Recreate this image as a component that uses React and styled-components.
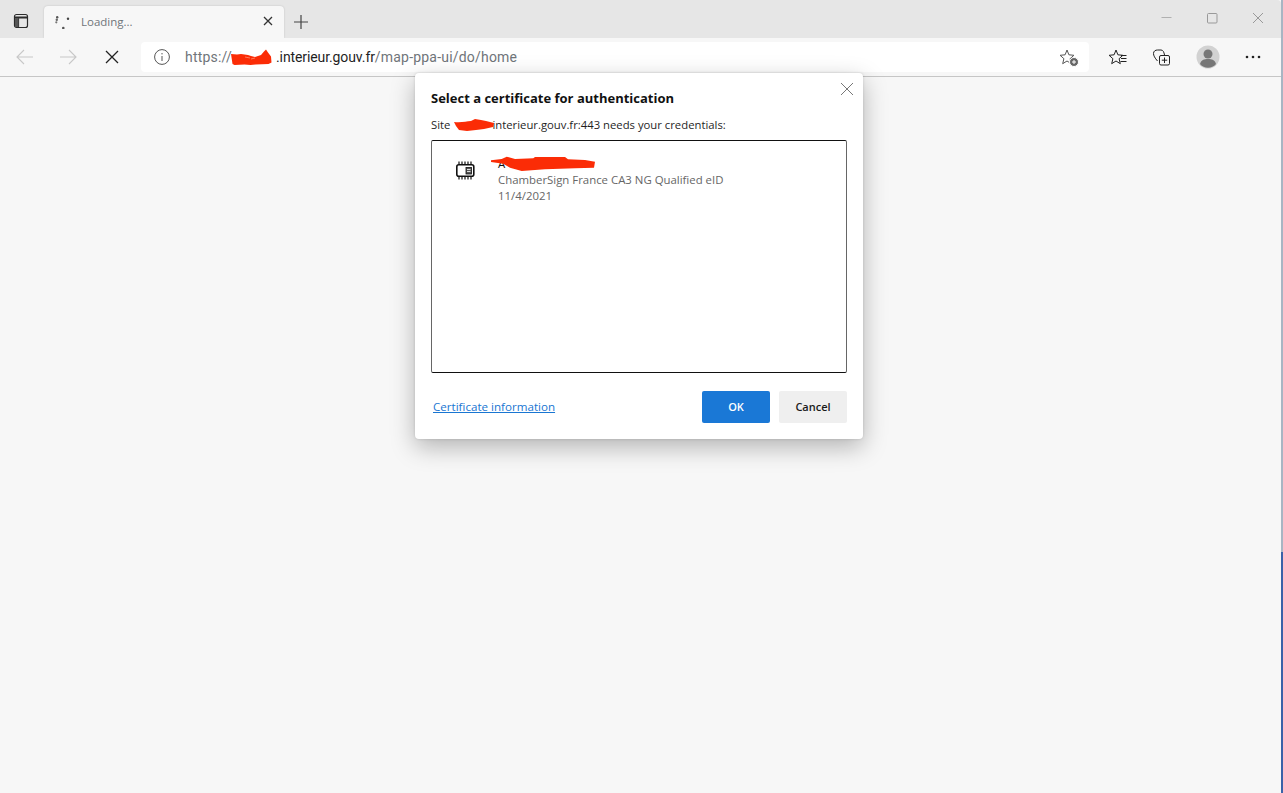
import styled, { createGlobalStyle } from 'styled-components';

const GlobalStyle = createGlobalStyle`
  html, body {
    margin: 0;
    padding: 0;
    height: 100%;
    overflow: hidden;
    background: #f7f7f7;
    font-family: "Open Sans", "Noto Sans", sans-serif;
  }
  * {
    box-sizing: border-box;
  }
`;

const Screen = styled.div`
  width: 1283px;
  height: 793px;
  display: flex;
`;

const Window = styled.div`
  position: relative;
  width: 1281px;
  height: 793px;
  display: flex;
  flex-direction: column;
  background: #f7f7f7;
`;

const DesktopEdge = styled.div`
  width: 2px;
  height: 793px;
  background: linear-gradient(to bottom, #a8b5c3 0, #a8b5c3 552px, #3a62a8 552px, #3a62a8 100%);
`;

const TabStrip = styled.div`
  height: 38px;
  flex: none;
  display: flex;
  align-items: flex-end;
  background: #e6e6e6;
  padding-left: 9px;
  border-top-right-radius: 4px;
`;

const StripButton = styled.div`
  width: 24px;
  height: 24px;
  margin-bottom: 5px;
  display: flex;
  align-items: center;
  justify-content: center;
`;

const Tab = styled.div`
  width: 240px;
  height: 32px;
  margin-left: 11px;
  padding: 0 10px 2px 11px;
  display: flex;
  align-items: center;
  background: #f7f7f7;
  border-radius: 4px 4px 0 0;
  box-shadow: 0 0 2px rgba(0, 0, 0, 0.18);
`;

const TabTitle = styled.span`
  flex: 1;
  margin-left: 10px;
  font-size: 11.5px;
  color: #70757a;
`;

const NewTab = styled.div`
  width: 24px;
  height: 24px;
  margin: 0 0 4px 5px;
  display: flex;
  align-items: center;
  justify-content: center;
`;

const WindowControls = styled.div`
  margin-left: auto;
  height: 38px;
  display: flex;
  gap: 34px;
  padding: 12px 17px 0 0;
`;

const Toolbar = styled.div`
  height: 39px;
  flex: none;
  display: flex;
  align-items: center;
  padding: 0 0 1px 13px;
  background: #f7f7f7;
  border-bottom: 1px solid #c6c6c6;
`;

const NavButton = styled.div`
  width: 24px;
  height: 24px;
  margin-right: ${(props) => props.$gap}px;
  display: flex;
  align-items: center;
  justify-content: center;
`;

const AddressBar = styled.div`
  width: 948px;
  height: 30px;
  padding: 0 10px 0 13px;
  display: flex;
  align-items: center;
  background: #ffffff;
  border-radius: 4px;
`;

const Url = styled.div`
  position: relative;
  flex: 1;
  margin-left: 15px;
  font-family: Roboto, "Open Sans", sans-serif;
  font-size: 14px;
  letter-spacing: 0.2px;
  color: #70757a;
  white-space: nowrap;
`;

const UrlHost = styled.span`
  margin-left: 44px;
  letter-spacing: -0.1px;
  color: #1f1f1f;
`;

const Actions = styled.div`
  display: flex;
  align-items: center;
  margin-left: 17px;
`;

const ActionButton = styled.div`
  width: 24px;
  height: 24px;
  margin-right: ${(props) => props.$gap}px;
  display: flex;
  align-items: center;
  justify-content: center;
`;

const Scribble = styled.svg`
  position: absolute;
  left: ${(props) => props.$left}px;
  top: ${(props) => props.$top}px;
`;

const Dialog = styled.div`
  position: absolute;
  left: 415px;
  top: 73px;
  width: 448px;
  height: 366px;
  padding: 16px;
  display: flex;
  flex-direction: column;
  background: #ffffff;
  border-radius: 4px;
  box-shadow: 0 8px 24px rgba(0, 0, 0, 0.28), 0 0 3px rgba(0, 0, 0, 0.14);
`;

const CloseButton = styled.div`
  position: absolute;
  right: 8px;
  top: 7px;
  width: 16px;
  height: 16px;
`;

const DialogTitle = styled.h1`
  margin: 0;
  font-size: 13px;
  line-height: 18px;
  font-weight: 700;
  color: #111111;
`;

const DialogText = styled.p`
  position: relative;
  margin: 10px 0 0;
  font-size: 11.3px;
  line-height: 16px;
  color: #1f1f1f;
  white-space: nowrap;
`;

const SiteHost = styled.span`
  margin-left: 42px;
`;

const CertList = styled.div`
  width: 416px;
  height: 233px;
  margin-top: 7px;
  padding: 15px 22px;
  display: flex;
  background: #ffffff;
  border-top: 1px solid #111111;
  border-bottom: 1px solid #111111;
  border-left: 1px solid #666666;
  border-right: 1px solid #666666;
  border-radius: 2px;
`;

const CertIcon = styled.div`
  width: 22px;
  height: 22px;
  margin-top: 3px;
`;

const CertInfo = styled.div`
  position: relative;
  margin-left: 22px;
  font-size: 11.4px;
  line-height: 16px;
  color: #666666;
`;

const CertName = styled.div`
  color: #111111;
`;

const DialogFooter = styled.div`
  display: flex;
  align-items: center;
  margin-top: 18px;
  padding-left: 2px;
`;

const CertLink = styled.a`
  flex: 1;
  padding-bottom: 2px;
  font-size: 11.6px;
  font-weight: 500;
  color: #1976d2;
  text-decoration: underline;
`;

const DialogButton = styled.div`
  width: 68px;
  height: 32px;
  padding-bottom: 2px;
  margin-left: ${(props) => (props.$primary ? 0 : 9)}px;
  display: flex;
  align-items: center;
  justify-content: center;
  font-size: 11px;
  font-weight: 600;
  color: ${(props) => (props.$primary ? '#ffffff' : '#1a1a1a')};
  background: ${(props) => (props.$primary ? '#1a78d6' : '#efefef')};
  border-radius: 2px;
`;

const Icon = ({ size = 16, children, stroke = '#333', width = 1 }) => (
  <svg
    width={size}
    height={size}
    viewBox={`0 0 ${size} ${size}`}
    fill="none"
    stroke={stroke}
    strokeWidth={width}
  >
    {children}
  </svg>
);

const STAR = 'M8 3l1.9 4.8 5 .5-3.8 3.4 1.2 5L8 14l-4.300 2.700 1.200-5L1.100 8.300l5-.5z';

const App = () => {
  return (
    <Screen>
      <GlobalStyle />
      <Window>
        <TabStrip>
          <StripButton>
            <Icon size={16} stroke="#2b2b2b" width={1.2}>
              <rect x="1.500" y="1.500" width="13" height="13" rx="2" />
              <path d="M1.500 4.500h13" strokeWidth="2" />
              <path d="M5.500 4.500v10" />
              <rect x="2" y="5" width="3.500" height="9" fill="#555" stroke="none" />
            </Icon>
          </StripButton>
          <Tab>
            <Icon size={16} stroke="none">
              <circle cx="2.200" cy="4.300" r="1.200" fill="#555" />
              <circle cx="1.800" cy="6.800" r="1.200" fill="#666" />
              <circle cx="1.300" cy="9.300" r="1.100" fill="#777" />
              <circle cx="13" cy="5.700" r="1.200" fill="#444" />
              <circle cx="8.300" cy="15" r="1.300" fill="#555" />
            </Icon>
            <TabTitle>Loading...</TabTitle>
            <Icon size={12} stroke="#333" width={1.3}>
              <path d="M2 2l8 8M10 2l-8 8" />
            </Icon>
          </Tab>
          <NewTab>
            <Icon size={16} stroke="#444" width={1.2}>
              <path d="M8 1v14M1 8h14" />
            </Icon>
          </NewTab>
          <WindowControls>
            <Icon size={12} stroke="#b0b0b0">
              <path d="M1.500 5.500h10" />
            </Icon>
            <Icon size={12} stroke="#999">
              <rect x="1.500" y="1.500" width="9.500" height="9.500" rx="1" />
            </Icon>
            <Icon size={12} stroke="#999">
              <path d="M1 1l10 10M11 1L1 11" />
            </Icon>
          </WindowControls>
        </TabStrip>
        <Toolbar>
          <NavButton $gap={19}>
            <Icon size={18} stroke="#c8c8c8" width={1.1}>
              <path d="M1 9h16M8 2L1 9l7 7" />
            </Icon>
          </NavButton>
          <NavButton $gap={20}>
            <Icon size={18} stroke="#c8c8c8" width={1.1}>
              <path d="M17 9H1M10 2l7 7-7 7" />
            </Icon>
          </NavButton>
          <NavButton $gap={17}>
            <Icon size={14} stroke="#222" width={1.3}>
              <path d="M1 1l12 12M13 1L1 13" />
            </Icon>
          </NavButton>
          <AddressBar>
            <Icon size={16} stroke="#555">
              <circle cx="8" cy="8" r="7.400" />
              <path d="M8 7v5M8 4v1.400" />
            </Icon>
            <Url>
              https://
              <Scribble $left={45} $top={-1} width="44" height="19" viewBox="0 0 44 19">
                <path
                  d="M1 6l6 .5 4-.5 7 1 3 1 4 1 6-2 3-3.500 2-2 2 3 3 4 .5 6-3 1.500-13 .5-5 .5-6-.5-10 .5-2-1z"
                  fill="#fb2c06"
                />
                <path d="M15 9l5 1M21 11l4-1" stroke="#ff7a5c" strokeWidth="1" />
              </Scribble>
              <UrlHost>.interieur.gouv.fr</UrlHost>/map-ppa-ui/do/home
            </Url>
            <Icon size={20} stroke="#555">
              <path d={STAR} />
              <circle cx="15" cy="15" r="4.500" fill="#666" stroke="#fff" />
              <path d="M13 15h4M15 13v4" stroke="#fff" />
            </Icon>
          </AddressBar>
          <Actions>
            <ActionButton $gap={20}>
              <Icon size={20} stroke="#222">
                <path d={STAR} />
                <path d="M13 8.500h5.500M13 11.500h5.500M12.500 14.500h6" />
              </Icon>
            </ActionButton>
            <ActionButton $gap={22}>
              <Icon size={20} stroke="#222">
                <path d="M5.500 14C2.800 11 1.500 8.500 1.500 6.500 1.500 4 3.500 3 5.500 3H9c2 0 3 2 3.500 5" />
                <rect x="7.500" y="8.500" width="10" height="9.500" rx="1.500" />
                <path d="M12.500 10.500v5.500M9.800 13.200h5.400" />
              </Icon>
            </ActionButton>
            <ActionButton $gap={21}>
              <svg width="24" height="24" viewBox="0 0 24 24">
                <circle cx="12" cy="12" r="11.500" fill="#d2d2d2" />
                <circle cx="12" cy="9" r="4.500" fill="#777" />
                <path d="M4 19c1-4 4-5 8-5s7 1 8 5c-4 5-12 5-16 0z" fill="#777" />
              </svg>
            </ActionButton>
            <ActionButton $gap={0}>
              <svg width="16" height="4" viewBox="0 0 16 4">
                <circle cx="2" cy="2" r="1.300" fill="#222" />
                <circle cx="8" cy="2" r="1.300" fill="#222" />
                <circle cx="14" cy="2" r="1.300" fill="#222" />
              </svg>
            </ActionButton>
          </Actions>
        </Toolbar>
        <Dialog>
          <CloseButton>
            <Icon size={16} stroke="#777">
              <path d="M2 2l12 12M14 2L2 14" />
            </Icon>
          </CloseButton>
          <DialogTitle>Select a certificate for authentication</DialogTitle>
          <DialogText>
            Site
            <Scribble $left={23} $top={1} width="42" height="14" viewBox="0 0 42 14">
              <path d="M0 4c8 1 12-1 17-1l4-2 6 1 5 1 8 2-1 4-9 2-8 1-9 1-8-1-3-4z" fill="#fb2c06" />
            </Scribble>
            <SiteHost>interieur.gouv.fr:443 needs your credentials:</SiteHost>
          </DialogText>
          <CertList>
            <CertIcon>
              <Icon size={22} stroke="#111" width={1.600}>
                <rect x="2.800" y="5.800" width="17" height="11.500" rx="2" />
                <rect x="12" y="8.500" width="5.500" height="6.500" fill="#555" strokeWidth="0.800" />
                <path d="M13 10.500h3.500M13 12.500h3.500" stroke="#fff" strokeWidth="0.800" />
                <path
                  d="M5 2.500v3M8 2.500v3M11 2.500v3M14 2.500v3M17 2.500v3M5 17.500v3M8 17.500v3M11 17.500v3M14 17.500v3M17 17.500v3"
                  strokeWidth="1.200"
                />
              </Icon>
            </CertIcon>
            <CertInfo>
              <CertName>A</CertName>
              <Scribble $left={-8} $top={0} width="106" height="16" viewBox="0 0 106 16">
                <path
                  d="M1 4.300L11.700 3l5-2.300L25 3l18.300-.7L45 1h30l3 2.300L95 4l10 1.700-1 6-19 .6-30 1-23.300 1.700L20 11.700l-6.700-4L1 6z"
                  fill="#fb2c06"
                />
              </Scribble>
              <div>ChamberSign France CA3 NG Qualified eID</div>
              <div>11/4/2021</div>
            </CertInfo>
          </CertList>
          <DialogFooter>
            <CertLink>Certificate information</CertLink>
            <DialogButton $primary>OK</DialogButton>
            <DialogButton>Cancel</DialogButton>
          </DialogFooter>
        </Dialog>
      </Window>
      <DesktopEdge />
    </Screen>
  );
};

export default App;
